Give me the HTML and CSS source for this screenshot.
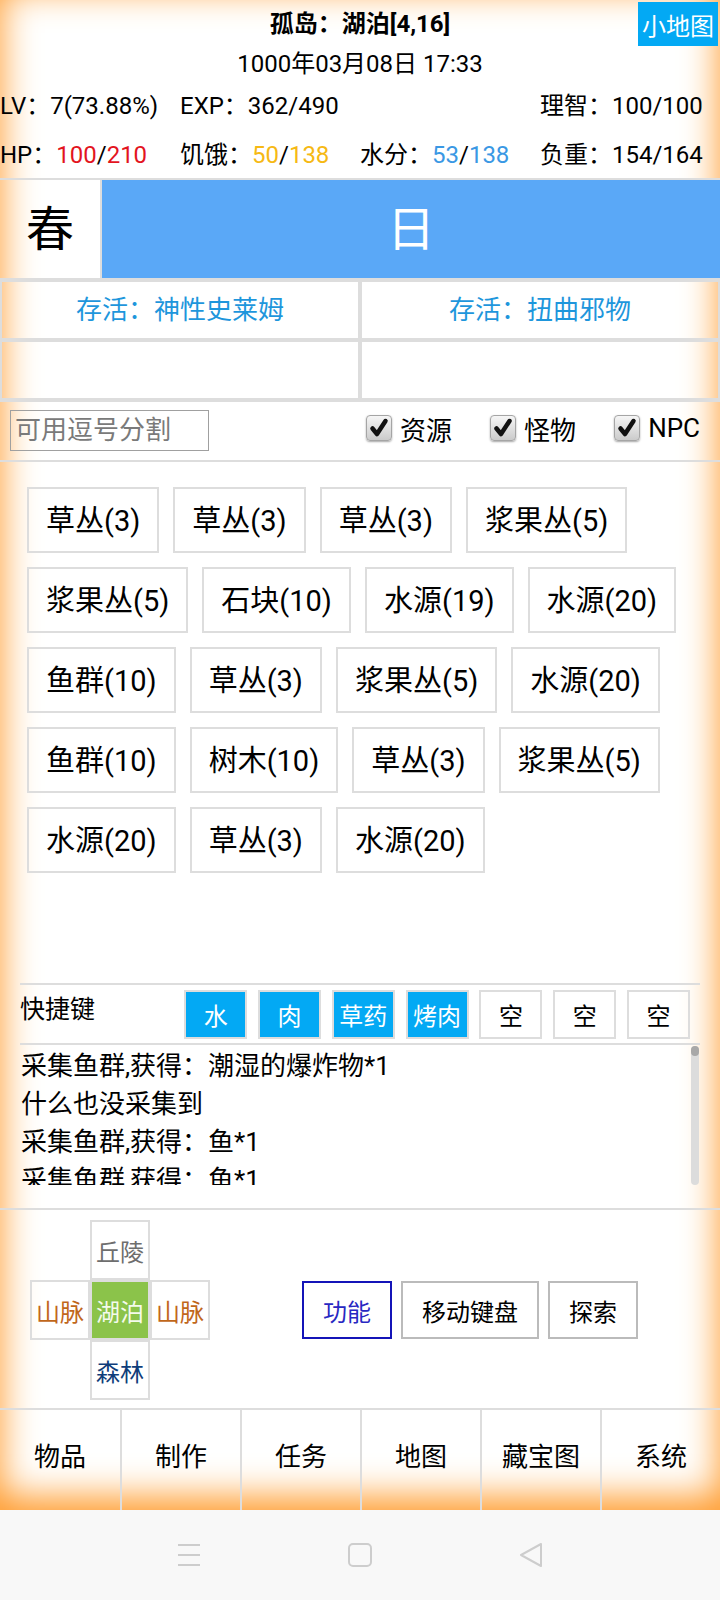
FILE: index.html
```html
<!DOCTYPE html>
<html>
	<head>
		<meta charset="utf-8">
		<title>孤岛</title>
		<link rel="stylesheet" href="styles.css">
	</head>
	<body>
		<div class="app">
			<div class="top">
				<div class="title-row">
					<span></span>
					<b class="title">孤岛：湖泊[4,16]</b>
					<button type="button" class="minimap">小地图</button>
				</div>
				<div class="date">1000年03月08日 17:33</div>
				<div class="stats">
					<span>LV：7(73.88%)</span>
					<span>EXP：362/490</span>
					<span></span>
					<span>理智：100/100</span>
					<span>HP：<i class="red">100</i>/<i class="red">210</i></span>
					<span>饥饿：<i class="gold">50</i>/<i class="gold">138</i></span>
					<span>水分：<i class="blue">53</i>/<i class="blue">138</i></span>
					<span>负重：154/164</span>
				</div>
			</div>

			<div class="season">
				<div class="season-name">春</div>
				<div class="daytime">日</div>
			</div>

			<div class="alive">
				<div class="alive-cell">存活：神性史莱姆</div>
				<div class="alive-cell">存活：扭曲邪物</div>
				<div class="alive-cell"></div>
				<div class="alive-cell"></div>
			</div>

			<div class="filter">
				<input type="text" class="search" placeholder="可用逗号分割">
				<label class="check first"><span class="box"><svg viewBox="0 0 24 24" width="24" height="24"><path d="M5.5 12.5 L10 18 L18.5 5" /></svg></span>资源</label>
				<label class="check"><span class="box"><svg viewBox="0 0 24 24" width="24" height="24"><path d="M5.5 12.5 L10 18 L18.5 5" /></svg></span>怪物</label>
				<label class="check"><span class="box"><svg viewBox="0 0 24 24" width="24" height="24"><path d="M5.5 12.5 L10 18 L18.5 5" /></svg></span>NPC</label>
			</div>

			<div class="items">
				<button type="button" class="item">草丛(3)</button>
				<button type="button" class="item">草丛(3)</button>
				<button type="button" class="item">草丛(3)</button>
				<button type="button" class="item">浆果丛(5)</button>
				<button type="button" class="item">浆果丛(5)</button>
				<button type="button" class="item">石块(10)</button>
				<button type="button" class="item">水源(19)</button>
				<button type="button" class="item">水源(20)</button>
				<button type="button" class="item">鱼群(10)</button>
				<button type="button" class="item">草丛(3)</button>
				<button type="button" class="item">浆果丛(5)</button>
				<button type="button" class="item">水源(20)</button>
				<button type="button" class="item">鱼群(10)</button>
				<button type="button" class="item">树木(10)</button>
				<button type="button" class="item">草丛(3)</button>
				<button type="button" class="item">浆果丛(5)</button>
				<button type="button" class="item">水源(20)</button>
				<button type="button" class="item">草丛(3)</button>
				<button type="button" class="item">水源(20)</button>
			</div>

			<div class="hotkeys">
				<span class="hk-label">快捷键</span>
				<div class="hk-list">
					<button type="button" class="hk on">水</button>
					<button type="button" class="hk on">肉</button>
					<button type="button" class="hk on">草药</button>
					<button type="button" class="hk on">烤肉</button>
					<button type="button" class="hk">空</button>
					<button type="button" class="hk">空</button>
					<button type="button" class="hk">空</button>
				</div>
			</div>

			<div class="log">
				<p>采集鱼群,获得：潮湿的爆炸物*1</p>
				<p>什么也没采集到</p>
				<p>采集鱼群,获得：鱼*1</p>
				<p>采集鱼群,获得：鱼*1</p>
				<div class="scrollbar"><div class="thumb"></div></div>
			</div>

			<div class="move">
				<div class="cross">
					<span></span>
					<span class="cell hill">丘陵</span>
					<span></span>
					<span class="cell mount">山脉</span>
					<span class="cell here">湖泊</span>
					<span class="cell mount">山脉</span>
					<span></span>
					<span class="cell forest">森林</span>
					<span></span>
				</div>
				<div class="actions">
					<button type="button" class="act func">功能</button>
					<button type="button" class="act">移动键盘</button>
					<button type="button" class="act">探索</button>
				</div>
			</div>

			<div class="menu">
				<button type="button">物品</button>
				<button type="button">制作</button>
				<button type="button">任务</button>
				<button type="button">地图</button>
				<button type="button">藏宝图</button>
				<button type="button">系统</button>
			</div>
		</div>

		<div class="sysbar">
			<svg width="24" height="24" viewBox="0 0 24 24"><path d="M1 2 H23 M1 12 H23 M1 22 H23" /></svg>
			<svg width="24" height="24" viewBox="0 0 24 24"><rect x="1" y="1" width="22" height="22" rx="4" /></svg>
			<svg width="24" height="26" viewBox="0 0 24 26"><path d="M22 2 L2 13 L22 24 Z" /></svg>
		</div>
	</body>
</html>
```

FILE: styles.css
```css
body {
	margin: 0;
	font-family: Roboto, "Noto Sans CJK SC", sans-serif;
	color: #000;
	background-color: #f8f8f8;
}

button {
	font: inherit;
	color: inherit;
	background: transparent;
	margin: 0;
	padding: 0;
	outline: none;
}

.app {
	height: 1510px;
	display: flex;
	flex-direction: column;
	background-color: #fff;
	box-shadow: inset 0 -12px 36px 1px #ff9a2a;
}

/* 顶部状态 */
.top {
	font-size: 24px;
	border-bottom: 2px solid #ddd;
}

.title-row {
	display: grid;
	grid-template-columns: 1fr auto 1fr;
	height: 46px;
	align-items: center;
}

.title {
	padding-bottom: 3px;
}

.minimap {
	justify-self: end;
	align-self: start;
	margin: 2px 2px 0 0;
	height: 44px;
	padding: 0 4px;
	border: none;
	background-color: #03a9f4;
	color: #fff;
}

.date {
	height: 32px;
	line-height: 32px;
	padding-top: 2px;
	text-align: center;
}

.stats {
	display: grid;
	grid-template-columns: repeat(4, 180px);
	grid-auto-rows: 49px;
	align-items: center;
	white-space: nowrap;
}

.stats span {
	padding-bottom: 2px;
}

.stats i {
	font-style: normal;
}

.red {
	color: #e3141e;
}

.gold {
	color: #f6b914;
}

.blue {
	color: #3a98e4;
}

/* 季节 */
.season {
	display: flex;
	height: 98px;
	font-size: 48px;
}

.season-name {
	width: 100px;
	border-right: 2px solid #ddd;
	display: flex;
	align-items: center;
	justify-content: center;
	padding-bottom: 8px;
}

.daytime {
	flex: 1;
	display: flex;
	align-items: center;
	justify-content: center;
	padding-bottom: 8px;
	background-color: #5aa8f7;
	color: #fff;
}

/* 存活 */
.alive {
	display: grid;
	grid-template-columns: 1fr 1fr;
	border-top: 2px solid #ddd;
	border-bottom: 2px solid #ddd;
}

.alive-cell {
	height: 60px;
	box-sizing: border-box;
	border: 2px solid #ddd;
	display: flex;
	align-items: center;
	justify-content: center;
	padding-bottom: 5px;
	font-size: 26px;
	color: #1e96dc;
}

/* 筛选 */
.filter {
	height: 58px;
	border-bottom: 2px solid #ddd;
	display: flex;
	align-items: center;
	padding: 0 20px 0 10px;
	font-size: 26px;
}

.search {
	width: 199px;
	height: 41px;
	box-sizing: border-box;
	border: 1px solid #a0a0a0;
	padding: 0 4px 2px;
	font: inherit;
	outline: none;
	background: transparent;
}

.search::placeholder {
	color: #7a7a7a;
}

.check {
	display: flex;
	align-items: center;
	gap: 8px;
	margin-left: 38px;
	margin-bottom: 5px;
}

.check.first {
	margin-left: auto;
}

.box {
	width: 24px;
	height: 24px;
	border: 1px solid #a5a5a5;
	border-radius: 4px;
	background: linear-gradient(#f6f6f6, #cbcbcb);
	box-shadow: 0 1px 2px rgba(0, 0, 0, 0.35);
}

.box svg {
	display: block;
}

.box path {
	fill: none;
	stroke: #111;
	stroke-width: 4.5;
	stroke-linecap: round;
	stroke-linejoin: round;
}

/* 资源列表 */
.items {
	height: 522px;
	box-sizing: border-box;
	padding: 25px 20px 0 27px;
	display: flex;
	flex-wrap: wrap;
	align-content: flex-start;
	gap: 14px;
}

.item {
	height: 66px;
	border: 2px solid #ddd;
	padding: 0 17px 3px;
	font-size: 29px;
}

/* 快捷键 */
.hotkeys {
	margin: 0 20px;
	padding: 4px 10px 4px 0;
	border-top: 2px solid #ddd;
	border-bottom: 2px solid #ddd;
	display: flex;
	align-items: center;
}

.hk-label {
	font-size: 25px;
	margin-bottom: 14px;
}

.hk-list {
	margin-left: auto;
	display: grid;
	grid-template-columns: repeat(7, 63px);
	gap: 10.8px;
}

.hk {
	height: 49px;
	border: 2px solid #ddd;
	font-size: 24px;
}

.hk.on {
	background-color: #03a9f4;
	color: #fff;
}

/* 日志 */
.log {
	position: relative;
	margin: 0 20px;
	height: 140px;
	box-sizing: border-box;
	padding: 2px 0 0 1px;
	overflow: hidden;
	font-size: 26px;
	line-height: 38px;
}

.log p {
	margin: 0;
}

.scrollbar {
	position: absolute;
	top: 1px;
	right: 1px;
	bottom: 0;
	width: 8px;
	border-radius: 4px;
	background-color: #dcdcdc;
}

.thumb {
	height: 10px;
	border-radius: 4px;
	background-color: #a8a8a8;
}

/* 移动 */
.move {
	margin-top: 23px;
	border-top: 2px solid #ddd;
	padding: 10px 0 8px 30px;
	display: flex;
}

.cross {
	display: grid;
	grid-template-columns: repeat(3, 60px);
	grid-template-rows: repeat(3, 60px);
	font-size: 24px;
}

.cell {
	box-sizing: border-box;
	border: 2px solid #ddd;
	display: flex;
	align-items: center;
	justify-content: center;
}

.hill {
	color: #6e6e6e;
}

.mount {
	color: #c1671b;
}

.here {
	background-color: #8bc34a;
	color: #f4faec;
}

.forest {
	color: #0f3d7a;
}

.actions {
	flex: 1;
	display: flex;
	align-items: center;
	justify-content: center;
	gap: 9px;
	padding-left: 10px;
}

.act {
	height: 58px;
	border: 2px solid #bbb;
	padding: 0 19px;
	font-size: 24px;
}

.act.func {
	border-color: #1414b8;
	color: #2828c2;
}

/* 底部菜单 */
.menu {
	border-top: 2px solid #ddd;
	height: 100px;
	display: grid;
	grid-template-columns: repeat(6, 1fr);
}

.menu button {
	border: none;
	border-left: 2px solid #ddd;
	font-size: 26px;
	padding-bottom: 12px;
}

.menu button:first-child {
	border-left: none;
}

/* 系统导航 */
.sysbar {
	height: 90px;
	display: flex;
	align-items: center;
	justify-content: center;
	gap: 147px;
}

.sysbar path,
.sysbar rect {
	fill: none;
	stroke: #cdcdcd;
	stroke-width: 2;
	stroke-linejoin: round;
}
```
